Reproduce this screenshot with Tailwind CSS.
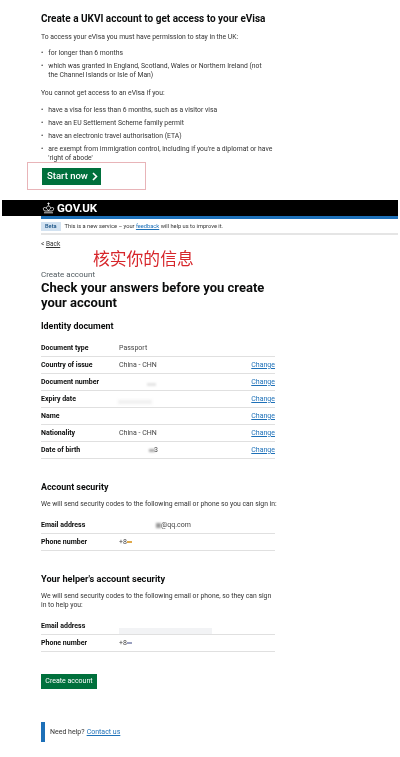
<!DOCTYPE html>
<html>
<head>
<meta charset="utf-8">
<script src="https://cdn.jsdelivr.net/npm/@tailwindcss/browser@4"></script>
<title>Check your answers</title>
</head>
<body class="bg-white font-['Roboto','Noto_Sans_CJK_SC',sans-serif] text-[#0b0c0c] overflow-hidden h-[757px] w-[400px]">
<div class="relative blur-[0.35px] h-[757px]">

<!-- first screenshot: start page -->
<div class="pl-[41px] pt-[12px] w-[290px] h-[200px]">
  <h2 class="text-[10px] leading-[13px] font-bold whitespace-nowrap">Create a UKVI account to get access to your eVisa</h2>
  <p class="mt-[8px] text-[6.800px] leading-[9px] text-[#333]">To access your eVisa you must have permission to stay in the UK:</p>
  <ul class="mt-[7px] text-[6.800px] leading-[9px] text-[#333]">
    <li class="flex gap-[5px]"><span>•</span><span>for longer than 6 months</span></li>
    <li class="flex gap-[5px] mt-[4px] w-[226px]"><span>•</span><span>which was granted in England, Scotland, Wales or Northern Ireland (not the Channel Islands or Isle of Man)</span></li>
  </ul>
  <p class="mt-[9px] text-[6.800px] leading-[9px] text-[#333]">You cannot get access to an eVisa if you:</p>
  <ul class="mt-[8px] text-[6.800px] leading-[9px] text-[#333]">
    <li class="flex gap-[5px]"><span>•</span><span>have a visa for less than 6 months, such as a visitor visa</span></li>
    <li class="flex gap-[5px] mt-[4px]"><span>•</span><span>have an EU Settlement Scheme family permit</span></li>
    <li class="flex gap-[5px] mt-[4px]"><span>•</span><span>have an electronic travel authorisation (ETA)</span></li>
    <li class="flex gap-[5px] mt-[4px] w-[240px]"><span>•</span><span>are exempt from immigration control, including if you're a diplomat or have 'right of abode'</span></li>
  </ul>
</div>

<!-- red box drawn over the screenshot -->
<div class="absolute left-[27px] top-[162px] w-[119px] h-[28px] border border-[#e8b4b8] flex items-center pl-[14px]">
  <div class="w-[59px] h-[17px] bg-[#00703c] text-white text-[9.500px] font-medium flex items-center pl-[5px] gap-[4px]">
    Start now
    <svg width="6" height="9" viewBox="0 0 6 9" fill="none" stroke="white" stroke-width="1.6"><path d="M1 1l3.500 3.500L1 8"/></svg>
  </div>
</div>

<!-- GOV.UK header -->
<div class="mx-[2px] h-[16px] bg-black flex items-center pl-[40px] gap-[2px] text-white">
  <svg width="13" height="12" viewBox="0 0 13 12" fill="none" stroke="white" stroke-width="0.8"><path d="M6.500 0.500v3M5.300 1.500h2.400M6.500 4C5 4 4.500 5 4.500 6M6.500 4C8 4 8.500 5 8.500 6M2.500 9C1 7.500 1 5.500 2.500 5.500 4 5.500 5.500 7 6.500 9 7.500 7 9 5.500 10.500 5.500 12 5.500 12 7.500 10.500 9zM2 10.800h9"/></svg>
  <span class="text-[11.500px] leading-[16px] font-bold">GOV.UK</span>
</div>
<div class="ml-[41px] mr-[2px] h-[3px] bg-[#1d70b8]"></div>

<!-- beta banner -->
<div class="ml-[41px] mr-[2px] h-[16px] border-b-2 border-[#e5e5e5] flex items-center gap-[4px] text-[5.700px] text-[#333]">
  <span class="bg-[#d2e2f1] px-[4px] leading-[9px] text-[#144e81] font-medium">Beta</span>
  <span>This is a new service – your <a class="underline text-[#1d70b8]">feedback</a> will help us to improve it.</span>
</div>

<div class="ml-[41px] mt-[5px] text-[6.500px] leading-[9px] text-[#333]">&lt; <a class="underline">Back</a></div>

<!-- main column -->
<div class="relative pl-[41px] w-[275px]">
  <div class="text-[16.800px] leading-[20px] text-[#d7262b] ml-[52px] -mt-[1px] font-['Noto_Sans_CJK_SC',sans-serif]">核实你的信息</div>
  <div class="text-[8px] leading-[10px] text-[#505a5f] mt-[2px]">Create account</div>
  <h1 class="text-[13px] leading-[15px] font-bold w-[234px]">Check your answers before you create your account</h1>

  <h3 class="text-[8.900px] leading-[11px] font-bold mt-[11px]">Identity document</h3>
  <dl class="mt-[8px] text-[7px]">
    <div class="flex items-center h-[17px] border-b-[1.500px] border-[#e0e0e0]"><dt class="w-[78px] font-bold">Document type</dt><dd class="grow text-[#444]">Passport</dd></div>
    <div class="flex items-center h-[17px] border-b-[1.500px] border-[#e0e0e0]"><dt class="w-[78px] font-bold">Country of issue</dt><dd class="grow text-[#444]">China - CHN</dd><a class="underline text-[#1d70b8]">Change</a></div>
    <div class="flex items-center h-[17px] border-b-[1.500px] border-[#e0e0e0]"><dt class="w-[78px] font-bold">Document number</dt><dd class="grow pl-[28px]"><span class="block w-[9px] h-[3px] bg-[#e4e4e4] blur-[1px] mt-[4px]"></span></dd><a class="underline text-[#1d70b8]">Change</a></div>
    <div class="flex items-center h-[17px] border-b-[1.500px] border-[#e0e0e0]"><dt class="w-[78px] font-bold">Expiry date</dt><dd class="grow"><span class="block w-[34px] h-[4px] bg-[#efefef] blur-[1.500px] mt-[5px] -ml-[1px]"></span></dd><a class="underline text-[#1d70b8]">Change</a></div>
    <div class="flex items-center h-[17px] border-b-[1.500px] border-[#e0e0e0]"><dt class="w-[78px] font-bold">Name</dt><dd class="grow"></dd><a class="underline text-[#1d70b8]">Change</a></div>
    <div class="flex items-center h-[17px] border-b-[1.500px] border-[#e0e0e0]"><dt class="w-[78px] font-bold">Nationality</dt><dd class="grow text-[#444]">China - CHN</dd><a class="underline text-[#1d70b8]">Change</a></div>
    <div class="flex items-center h-[17px] border-b-[1.500px] border-[#e0e0e0]"><dt class="w-[78px] font-bold">Date of birth</dt><dd class="grow text-[#444] pl-[30px] flex items-center"><span class="inline-block w-[6px] h-[3px] bg-[#aaa] blur-[1px] mr-[-1px]"></span>3</dd><a class="underline text-[#1d70b8]">Change</a></div>
  </dl>

  <h3 class="text-[8.900px] leading-[11px] font-bold mt-[23px]">Account security</h3>
  <p class="text-[6.800px] leading-[9px] mt-[7px] text-[#333] whitespace-nowrap">We will send security codes to the following email or phone so you can sign in:</p>
  <dl class="mt-[8px] text-[7px]">
    <div class="flex items-center h-[17px] border-b-[1.500px] border-[#e0e0e0]"><dt class="w-[78px] font-bold">Email address</dt><dd class="grow text-[#444] pl-[37px] flex items-center"><span class="inline-block w-[5px] h-[5px] bg-[#999] blur-[1px]"></span>@qq.com</dd></div>
    <div class="flex items-center h-[17px] border-b-[1.500px] border-[#e0e0e0]"><dt class="w-[78px] font-bold">Phone number</dt><dd class="grow text-[#444] flex items-center">+8<span class="inline-block w-[5px] h-[2px] bg-[#e0a94a] blur-[0.5px]"></span></dd></div>
  </dl>

  <h3 class="text-[9.200px] leading-[12px] font-bold mt-[22px]">Your helper's account security</h3>
  <p class="text-[6.800px] leading-[9px] mt-[7px] text-[#333]">We will send security codes to the following email or phone, so they can sign in to help you:</p>
  <dl class="mt-[8px] text-[7px]">
    <div class="flex items-center h-[17px] border-b-[1.500px] border-[#e0e0e0]"><dt class="w-[78px] font-bold">Email address</dt><dd class="grow"><span class="block w-[93px] h-[6px] bg-[#f2f3f5] mt-[9px] blur-[0.5px]"></span></dd></div>
    <div class="flex items-center h-[17px] border-b-[1.500px] border-[#e0e0e0]"><dt class="w-[78px] font-bold">Phone number</dt><dd class="grow text-[#444] flex items-center">+8<span class="inline-block w-[5px] h-[2px] bg-[#9aa0c0] blur-[0.5px]"></span></dd></div>
  </dl>

  <button class="mt-[22px] w-[56px] h-[15px] bg-[#00703c] text-white text-[7px] flex items-center justify-center">Create account</button>

  <div class="mt-[33px] border-l-4 border-[#1d70b8] h-[20px] pl-[5px] flex items-center text-[7px] text-[#333] gap-[2px]">Need help? <a class="underline text-[#1d70b8]">Contact us</a></div>
</div>
</div>
</body>
</html>
